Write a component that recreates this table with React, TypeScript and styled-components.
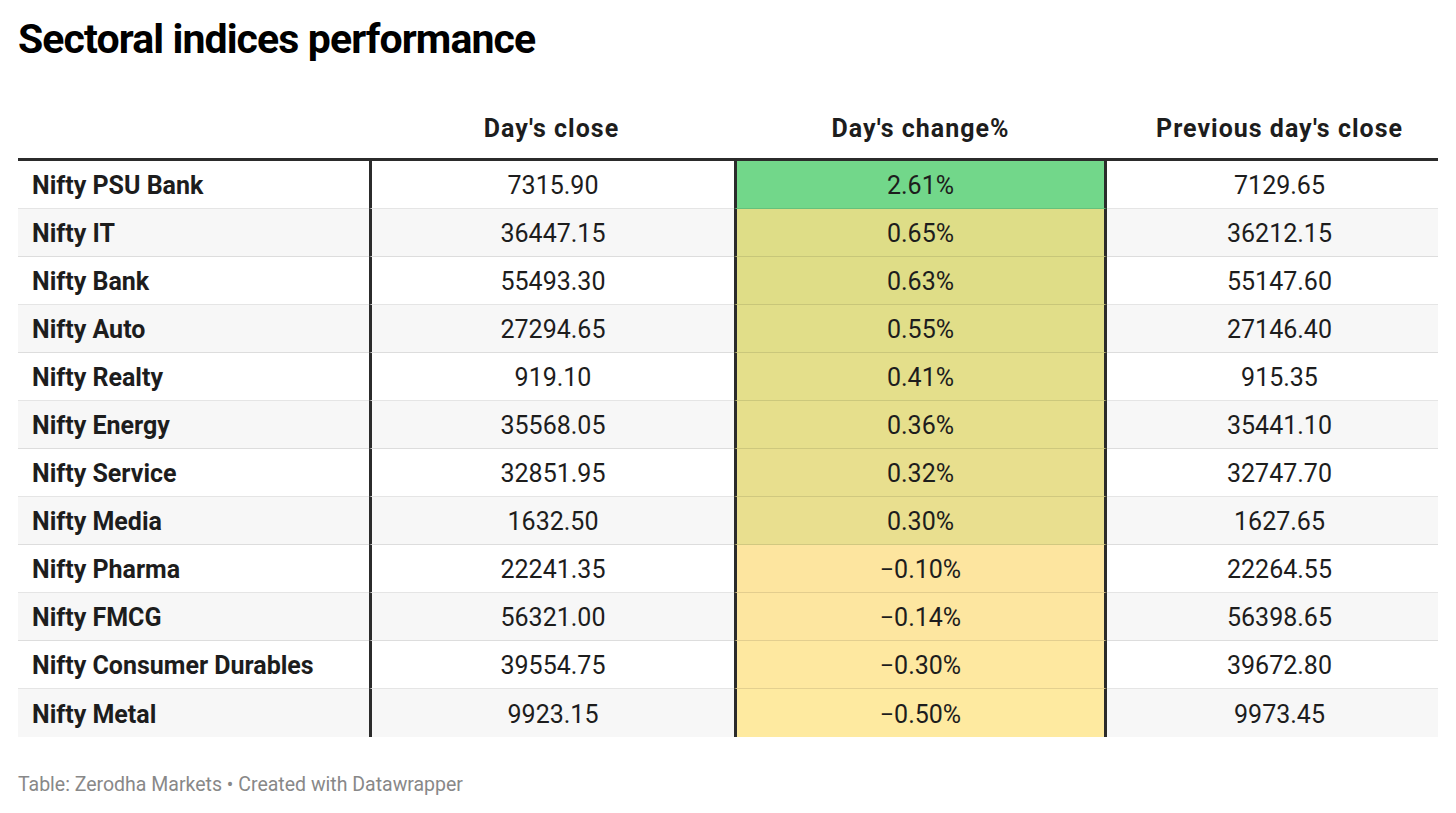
import { createGlobalStyle } from 'styled-components';
import styled from 'styled-components';

const GlobalStyle = createGlobalStyle`
  html, body {
    margin: 0;
    padding: 0;
    background: #ffffff;
  }
  body {
    font-family: Roboto, 'Liberation Sans', Arial, sans-serif;
    color: #1d1d1d;
  }
`;

interface SectorRow {
  name: string;
  close: string;
  change: string;
  prev: string;
  tint: string;
}

const ROWS: SectorRow[] = [
  { name: 'Nifty PSU Bank', close: '7315.90', change: '2.61%', prev: '7129.65', tint: '#72d78a' },
  { name: 'Nifty IT', close: '36447.15', change: '0.65%', prev: '36212.15', tint: '#dedd87' },
  { name: 'Nifty Bank', close: '55493.30', change: '0.63%', prev: '55147.60', tint: '#dfdd87' },
  { name: 'Nifty Auto', close: '27294.65', change: '0.55%', prev: '27146.40', tint: '#e1de89' },
  { name: 'Nifty Realty', close: '919.10', change: '0.41%', prev: '915.35', tint: '#e4df8b' },
  { name: 'Nifty Energy', close: '35568.05', change: '0.36%', prev: '35441.10', tint: '#e6df8c' },
  { name: 'Nifty Service', close: '32851.95', change: '0.32%', prev: '32747.70', tint: '#e8df8e' },
  { name: 'Nifty Media', close: '1632.50', change: '0.30%', prev: '1627.65', tint: '#e9df8f' },
  { name: 'Nifty Pharma', close: '22241.35', change: '\u22120.10%', prev: '22264.55', tint: '#fde59f' },
  { name: 'Nifty FMCG', close: '56321.00', change: '\u22120.14%', prev: '56398.65', tint: '#fde6a0' },
  { name: 'Nifty Consumer Durables', close: '39554.75', change: '\u22120.30%', prev: '39672.80', tint: '#fee8a0' },
  { name: 'Nifty Metal', close: '9923.15', change: '\u22120.50%', prev: '9973.45', tint: '#feeaa0' },
];

const Page = styled.div`
  width: 1420px;
  padding: 0 18px;
`;

const Title = styled.h1`
  margin: 0;
  padding-top: 14px;
  font-size: 41px;
  line-height: 50px;
  font-weight: 700;
  color: #000;
  letter-spacing: -0.9px;
`;

const Table = styled.div`
  margin-top: 51px;
  display: flex;
  flex-direction: column;
`;

const Row = styled.div<{ $striped?: boolean }>`
  display: grid;
  grid-template-columns: 351px 365px 373px 1fr;
  background: ${p => (p.$striped ? '#f7f7f7' : '#ffffff')};
`;

const HeadRow = styled(Row)`
  border-bottom: 3px solid #2b2b2b;
`;

const HeadCell = styled.div<{ $shift?: number }>`
  padding: 0 0 15px ${p => p.$shift ?? 0}px;
  font-size: 25px;
  line-height: 28px;
  font-weight: 700;
  letter-spacing: 1px;
  text-align: center;
  color: #1d1d1d;
`;

const Cell = styled.div<{ $bold?: boolean; $left?: boolean; $right?: boolean; $align?: 'left' | 'center'; $shift?: number; $tint?: string }>`
  box-sizing: border-box;
  height: 48px;
  display: flex;
  align-items: center;
  justify-content: ${p => (p.$align === 'left' ? 'flex-start' : 'center')};
  padding: 3px 0 0 ${p => p.$shift ?? 0}px;
  font-size: 25px;
  line-height: 28px;
  font-weight: ${p => (p.$bold ? 700 : 400)};
  color: #1d1d1d;
  background: ${p => p.$tint ?? 'transparent'};
  border-bottom: 1px solid rgba(0, 0, 0, 0.1);
  border-left: ${p => (p.$left ? '3px solid #2b2b2b' : 'none')};
  border-right: ${p => (p.$right ? '3px solid #2b2b2b' : 'none')};
`;

const LastRow = styled(Row)`
  & > div {
    border-bottom: none;
  }
`;

const Footer = styled.div`
  margin-top: 37px;
  font-size: 19.5px;
  line-height: 22px;
  color: #888888;
`;

export default function App() {
  return (
    <>
      <GlobalStyle />
      <Page>
        <Title>Sectoral indices performance</Title>
        <Table>
          <HeadRow>
            <HeadCell />
            <HeadCell>Day's close</HeadCell>
            <HeadCell>Day's change%</HeadCell>
            <HeadCell $shift={14}>Previous day's close</HeadCell>
          </HeadRow>
          {ROWS.map((r, i) => {
            const RowComp = i === ROWS.length - 1 ? LastRow : Row;
            return (
              <RowComp key={r.name} $striped={i % 2 === 1}>
                <Cell $bold $align="left" $shift={14}>{r.name}</Cell>
                <Cell $left>{r.close}</Cell>
                <Cell $left $right $tint={r.tint}>{r.change}</Cell>
                <Cell $shift={14}>{r.prev}</Cell>
              </RowComp>
            );
          })}
        </Table>
        <Footer>Table: Zerodha Markets • Created with Datawrapper</Footer>
      </Page>
    </>
  );
}
